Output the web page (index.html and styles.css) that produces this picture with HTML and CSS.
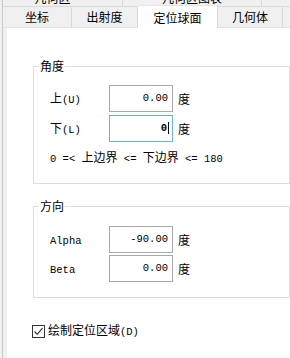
FILE: index.html
```html
<!DOCTYPE html>
<html lang="zh-CN">
<head>
  <meta charset="UTF-8">
  <title>定位球面</title>
  <link rel="stylesheet" href="styles.css">
</head>
<body>
  <div class="window">
    <!-- Upper tab row (mostly scrolled off) -->
    <div class="tabs tabs-top">
      <div class="tab t-a"><span>几何区</span></div>
      <div class="tab t-b"><span>几何区图表</span></div>
      <div class="tab t-c"></div>
    </div>

    <!-- Lower tab row -->
    <div class="tabs tabs-main">
      <div class="tab t-1">坐标</div>
      <div class="tab t-2">出射度</div>
      <div class="tab t-3 active">定位球面</div>
      <div class="tab t-4">几何体</div>
      <div class="tab t-5"></div>
    </div>

    <div class="page">
      <!-- Angle group -->
      <div class="group group-angle">
        <div class="group-title">角度</div>
        <div class="row">
          <div class="label">上<span class="m">(U)</span></div>
          <div class="edit"><span class="m">0.00</span></div>
          <div class="unit">度</div>
        </div>
        <div class="row">
          <div class="label">下<span class="m">(L)</span></div>
          <div class="edit focus"><span class="m caret">0</span></div>
          <div class="unit">度</div>
        </div>
        <div class="note"><span class="m">0 =&lt; </span>上边界<span class="m"> &lt;= </span>下边界<span class="m"> &lt;= 180</span></div>
      </div>

      <!-- Direction group -->
      <div class="group group-dir">
        <div class="group-title">方向</div>
        <div class="row">
          <div class="label"><span class="m">Alpha</span></div>
          <div class="edit"><span class="m">-90.00</span></div>
          <div class="unit">度</div>
        </div>
        <div class="row">
          <div class="label"><span class="m">Beta</span></div>
          <div class="edit"><span class="m">0.00</span></div>
          <div class="unit">度</div>
        </div>
      </div>

      <label class="check">
        <span class="box">
          <svg width="11" height="11" viewBox="0 0 11 11"><path d="M1.5 5.5 L4.2 8.3 L9.5 2.2" fill="none" stroke="#222" stroke-width="1.1"/></svg>
        </span>
        <span class="check-text">绘制定位区域<span class="m">(D)</span></span>
      </label>
    </div>
  </div>
</body>
</html>
```

FILE: styles.css
```css
/* Base */
* {
  box-sizing: border-box;
}

body {
  margin: 0;
  background-color: #f0f0f0;
  font-family: "Noto Sans CJK SC", "Noto Sans", sans-serif;
  font-size: 12px;
  color: #000;
  overflow: hidden;
}

/* Latin / digits in a SimSun-like monospace */
.m {
  font-family: "Liberation Mono", "DejaVu Sans Mono", monospace;
  font-size: 10.5px;
}

.window {
  display: flex;
  flex-direction: column;
  height: 358px;
  margin-left: 2px;
  border-left: 1px solid #c9c9c9;
}

/* Tabs */
.tabs {
  display: flex;
  background-color: #f0f0f0;
}

.tab {
  border-right: 1px solid #d9d9d9;
  text-align: center;
  white-space: nowrap;
}

.tabs-top {
  height: 7px;
  overflow: hidden;
  border-bottom: 1px solid #d9d9d9;
}

.tabs-top .tab {
  display: flex;
  align-items: flex-end;
  justify-content: center;
}

.tabs-top .tab span {
  line-height: 12px;
  margin-bottom: 2px;
}

.t-a { width: 120px; padding-right: 20px; }
.t-b { width: 139px; }
.t-c { flex: 1; border-right: none; }

.tabs-main {
  height: 21px;
}

.tabs-main .tab {
  line-height: 20px;
  border-bottom: 1px solid #e3e3e3;
}

.t-1 { width: 69px; }
.t-2 { width: 66px; }
.t-3 { width: 80px; }
.t-4 { width: 65px; }
.t-5 { flex: 1; border-right: none; }

.tabs-main .tab.active {
  background-color: #fff;
  margin-top: -2px;
  height: 23px;
  line-height: 24px;
  border-top: 1px solid #e6e6e6;
  border-bottom: none;
  position: relative;
}

/* Page */
.page {
  flex: 1;
  background-color: #fff;
  margin-left: 4px;
  padding: 38px 0 0 26px;
}

.group {
  position: relative;
  border: 1px solid #dcdcdc;
  padding-left: 16px;
}

.group-title {
  position: absolute;
  top: -7px;
  left: 5px;
  padding: 0 1px;
  line-height: 12px;
  background-color: #fff;
}

.group-angle {
  height: 118px;
  padding-top: 18px;
}

.group-dir {
  height: 92px;
  margin-top: 22px;
  padding-top: 19px;
}

.row {
  display: flex;
  align-items: center;
  margin-bottom: 3px;
}

.group-dir .row {
  margin-bottom: 2px;
}

.label {
  width: 59px;
  line-height: 14px;
}

.edit {
  width: 64px;
  height: 27px;
  border: 1px solid #a9a9a9;
  text-align: right;
  padding: 3px 4px 0 0;
  line-height: 14px;
}

.edit.focus {
  border-color: #6aaee8;
}

.caret {
  border-right: 1px solid #000;
  padding-right: 1px;
  margin-right: -1px;
  font-weight: bold;
}

.unit {
  margin-left: 5px;
  line-height: 14px;
}

.note {
  margin-top: 7px;
  line-height: 16px;
}

/* Checkbox */
.check {
  display: flex;
  align-items: center;
  margin: 25px 0 0 -1px;
}

.box {
  width: 13px;
  height: 13px;
  border: 1px solid #333;
  display: flex;
  align-items: center;
  justify-content: center;
}

.check-text {
  margin-left: 3px;
  line-height: 14px;
}
```
